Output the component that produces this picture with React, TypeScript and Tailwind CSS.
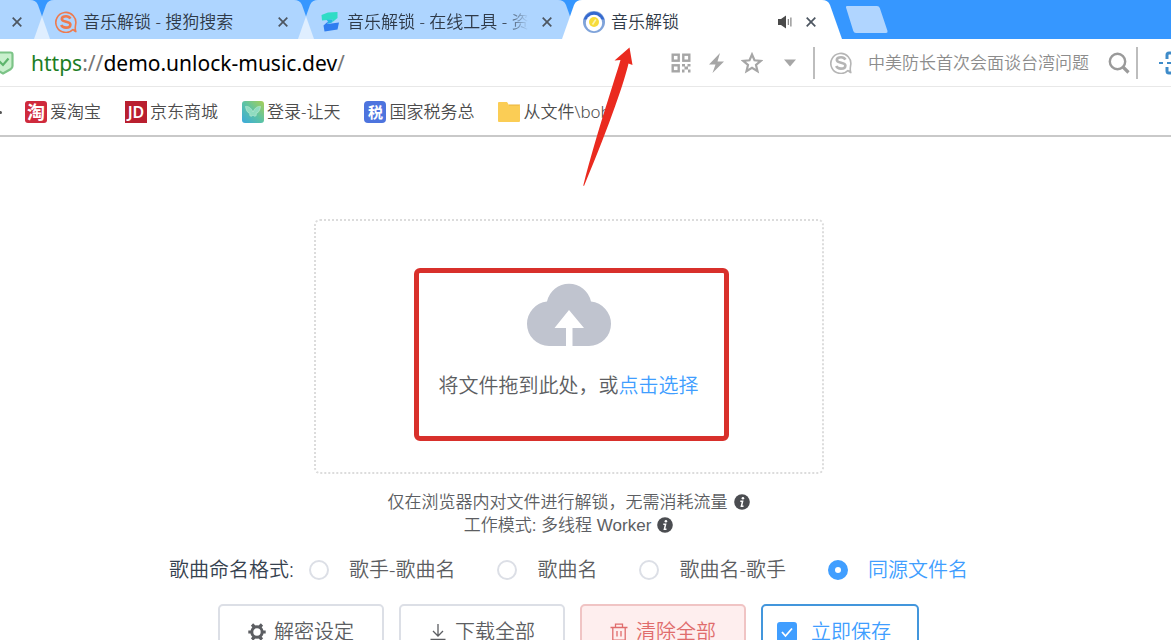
import { useState } from 'react';
import type { ReactNode } from 'react';

const ICON_GRAY = '#a6a6a6';

// ---------- favicons ----------

function SogouIcon({ color, className }: { color: string; className?: string }) {
  return (
    <svg viewBox="0 0 22 22" className={`size-[22px] shrink-0 ${className ?? ''}`} aria-hidden="true">
      <path
        d="M18.2 18.2A10 10 0 1 1 20.6 13.6 M20.6 13.6C20.2 16 19.8 17.8 20.8 20.6C19.8 20.2 19 19.4 18.2 18.2"
        fill="none"
        stroke={color}
        strokeWidth="1.6"
        strokeLinejoin="round"
      />
      <path
        d="M15.4 7.6C14.6 5.9 12.8 5.2 11 5.2C8.6 5.2 6.8 6.3 6.8 8C6.8 11.6 15.4 9.8 15.4 13.4C15.4 15.4 13.4 16.6 11 16.6C8.8 16.6 7 15.8 6.2 14"
        fill="none"
        stroke={color}
        strokeWidth="2.6"
      />
    </svg>
  );
}

function ToolIcon() {
  return (
    <svg viewBox="0 0 22 22" className="size-[22px] shrink-0" aria-hidden="true">
      <path d="M2.500 4L9 1.500L18.500 1V7L13 11.500L14 8.500L3 9.500Z" fill="#2fdcc6" />
      <path d="M4.500 14.500L9 10.500L8.500 13L20 11.500L18.500 18.500L5.500 20.500Z" fill="#2f7df0" />
      <path d="M7.500 8.800L14 8.500L13 11.500L8.500 13L9 10.500Z" fill="#27b4e2" />
    </svg>
  );
}

function UnlockMusicIcon() {
  return (
    <svg viewBox="0 0 22 22" className="size-[22px] shrink-0" aria-hidden="true">
      <circle cx="11" cy="11" r="11" fill="#7fa3da" />
      <path d="M0.500 8.500A11 11 0 0 1 21.500 8.500Z" fill="#3569cf" />
      <circle cx="11" cy="12" r="8.200" fill="#fff" />
      <circle cx="11" cy="11" r="5" fill="#f7dc3a" />
      <path d="M9.500 13.500L12.800 8.500" stroke="#fdf3ae" strokeWidth="1.600" />
    </svg>
  );
}

function ButterflyIcon() {
  return (
    <svg viewBox="0 0 22 22" className="size-[22px] shrink-0" aria-hidden="true">
      <defs>
        <linearGradient id="butterfly" x1="1" y1="0" x2="0" y2="1">
          <stop offset="0" stopColor="#a9cf55" />
          <stop offset="0.5" stopColor="#5cc3a4" />
          <stop offset="1" stopColor="#3aa9dc" />
        </linearGradient>
      </defs>
      <rect width="22" height="22" rx="3" fill="url(#butterfly)" />
      <path
        d="M11 11C9 6.5 6 5 3.5 5.5C4 9 5.5 12 8 12.5C7 14 8.5 17 11 14C13.500 17 15 14 14 12.5C16.500 12 18 9 18.500 5.500C16 5 13 6.500 11 11Z"
        fill="#8fdcc0"
        stroke="#c4ecd9"
        strokeWidth="0.6"
      />
    </svg>
  );
}

function FolderIcon() {
  return (
    <svg viewBox="0 0 22 22" className="size-[22px] shrink-0" aria-hidden="true">
      <path d="M0 2Q0 1 1 1H9L11 4H21Q22 4 22 5V20Q22 21 21 21H1Q0 21 0 20Z" fill="#fbcd55" />
      <path d="M11 4H22" stroke="#e9b43c" strokeWidth="1" />
    </svg>
  );
}

function GlyphIcon({ text, className }: { text: string; className: string }) {
  return (
    <span className={`flex size-[22px] shrink-0 items-center justify-center leading-none text-white ${className}`}>
      {text}
    </span>
  );
}

// ---------- tab strip ----------

interface TabProps {
  title: string;
  icon: ReactNode;
  active?: boolean;
}

function TabShape({ active, rightOnly }: { active?: boolean; rightOnly?: boolean }) {
  const fill = active ? 'fill-white' : 'fill-white/60';
  return (
    <div className="absolute inset-0 flex" aria-hidden="true">
      {!rightOnly && (
        <svg viewBox="0 0 20 39" className={`h-[39px] w-5 shrink-0 ${fill}`}>
          <path d="M0 39L12 5Q14 0 20 0V39Z" />
        </svg>
      )}
      <div className={`flex-1 ${active ? 'bg-white' : 'bg-white/60'}`} />
      <svg viewBox="0 0 20 39" className={`h-[39px] w-5 shrink-0 ${fill}`}>
        <path d="M20 39L8 5Q6 0 0 0V39Z" />
      </svg>
    </div>
  );
}

function CloseButton({ label }: { label: string }) {
  return (
    <button type="button" aria-label={label} className="shrink-0 p-1">
      <svg viewBox="0 0 10 10" className="size-2.5" aria-hidden="true">
        <path d="M0.700 0.700L9.300 9.300M9.300 0.700L0.700 9.300" stroke="#4d5661" strokeWidth="1.7" />
      </svg>
    </button>
  );
}

function Tab({ title, icon, active }: TabProps) {
  return (
    <div className="relative -ml-4 h-[39px] w-[280px] min-w-0">
      <TabShape active={active} />
      <div className="relative flex h-full items-center gap-1.5 pl-[21px] pr-[22px] pt-1">
        {icon}
        <a
          href="#"
          className={`min-w-0 flex-1 overflow-hidden whitespace-nowrap text-[17px] leading-6 text-[#2f3a48] ${
            title.length > 14 ? '[mask-image:linear-gradient(to_right,black_86%,transparent_98%)]' : ''
          }`}
        >
          {title}
        </a>
        {active && (
          <svg viewBox="0 0 14 14" className="mr-1 size-3.5 shrink-0" aria-hidden="true">
            <path d="M0 4H3L8 0.500V13.500L3 10H0Z" fill="#4a4a4a" />
            <path d="M10.300 4V10M12.900 2.500V11.500" stroke="#777" strokeWidth="1.100" />
          </svg>
        )}
        <CloseButton label={`关闭 ${title}`} />
      </div>
    </div>
  );
}

function TabStrip() {
  return (
    <div className="flex h-[39px] overflow-hidden bg-[#3697ff]">
      <div className="relative w-[50px] shrink-0">
        <TabShape rightOnly />
        <div className="relative flex h-full items-center pl-2 pt-1">
          <CloseButton label="关闭" />
        </div>
      </div>
      <Tab title="音乐解锁 - 搜狗搜索" icon={<SogouIcon color="#ee7a4e" />} />
      <Tab title="音乐解锁 - 在线工具 - 资" icon={<ToolIcon />} />
      <Tab title="音乐解锁" icon={<UnlockMusicIcon />} active />
      <button type="button" aria-label="新标签页" className="ml-0.5 shrink-0 self-start pt-1.5">
        <svg viewBox="0 0 44 27" className="h-[27px] w-11" aria-hidden="true">
          <path d="M2 1.500Q1.500 0 3 0H33Q35 0 35.800 2L43.500 25Q44 27 42 27H12Q10 27 9.300 25Z" fill="#b0d5ff" />
        </svg>
      </button>
    </div>
  );
}

// ---------- address bar ----------

function AddressBar() {
  return (
    <div className="flex h-12 items-center overflow-hidden border-b border-[#e8e8e8] bg-white">
      <svg viewBox="0 0 22 24" className="-ml-2 h-6 w-[22px] shrink-0" aria-hidden="true">
        <path
          d="M3.500 1.500H18.500Q20.500 1.500 20.500 3.500V15Q20.500 17 18.500 18.200L11 22.500L3.500 18.200Q1.500 17 1.500 15V3.500Q1.500 1.500 3.500 1.500Z"
          fill="#c9f0cd"
          stroke="#7cc487"
          strokeWidth="2.200"
        />
        <path d="M6.500 9.500L11 14L16.500 7.500" fill="none" stroke="#5db56c" strokeWidth="2.200" />
      </svg>
      <a href="#" className="ml-[17px] flex-1 whitespace-nowrap text-[21px] font-normal leading-7 text-black">
        <span className="text-[#1d7d24]">https</span>
        <span className="text-[#777]">://</span>
        demo.unlock-music.dev
        <span className="text-[#777]">/</span>
      </a>

      <div className="flex shrink-0 items-center">
        <button type="button" aria-label="二维码">
          <svg viewBox="0 0 20 20" className="size-5" aria-hidden="true">
            <g fill="none" stroke={ICON_GRAY} strokeWidth="2.400">
              <rect x="1.700" y="1.700" width="6" height="6" />
              <rect x="12.300" y="1.700" width="6" height="6" />
              <rect x="1.700" y="12.300" width="6" height="6" />
            </g>
            <path
              d="M11 11H14V13.500H11ZM16.500 11H19.500V13.500H16.500ZM13.500 13.500H17V16.500H13.500ZM11 16.500H13.500V19.500H11ZM17 16.500H19.500V19.500H17Z"
              fill={ICON_GRAY}
            />
          </svg>
        </button>
        <button type="button" aria-label="极速模式" className="ml-4">
          <svg viewBox="0 0 20 22" className="h-[22px] w-5" aria-hidden="true">
            <path d="M13 1L2 12.500H8.500L5.500 21L17 9.500H10.500Z" fill={ICON_GRAY} />
          </svg>
        </button>
        <button type="button" aria-label="收藏" className="ml-3.5">
          <svg viewBox="0 0 22 22" className="size-[22px]" aria-hidden="true">
            <path
              d="M11 2.500L13.500 8.300L19.800 8.900L15 13L16.500 19.200L11 15.900L5.500 19.200L7 13L2.200 8.900L8.500 8.300Z"
              fill="none"
              stroke={ICON_GRAY}
              strokeWidth="2.200"
            />
          </svg>
        </button>
        <button type="button" aria-label="更多" className="ml-5">
          <svg viewBox="0 0 14 8" className="h-2 w-3.5" aria-hidden="true">
            <path d="M1 0.500H13L7 7.500Z" fill={ICON_GRAY} />
          </svg>
        </button>
      </div>

      <form className="ml-4 flex shrink-0 items-center border-x-2 border-[#bdbdbd] py-1 pl-[15px] pr-1.5" onSubmit={e => e.preventDefault()}>
        <SogouIcon color="#b5b5b5" />
        <input
          type="text"
          aria-label="搜索"
          placeholder="中美防长首次会面谈台湾问题"
          className="ml-4 w-[232px] text-[17px] leading-6 outline-none placeholder:text-[#8c8c8c]"
        />
        <button type="submit" aria-label="搜索" className="ml-2">
          <svg viewBox="0 0 22 22" className="size-[22px]" aria-hidden="true">
            <circle cx="9.500" cy="9.500" r="7.700" fill="none" stroke="#9a9a9a" strokeWidth="2.400" />
            <path d="M15 15L20.500 20.500" stroke="#9a9a9a" strokeWidth="3.200" />
          </svg>
        </button>
      </form>
      <button type="button" aria-label="截图" className="ml-5 w-[13px] shrink-0 overflow-hidden">
        <svg viewBox="0 0 26 24" className="h-6 w-[26px]" aria-hidden="true">
          <path d="M13 2H11Q9 2 9 4V8M9 16V20Q9 22 11 22H13M21 2H23M21 22H23" fill="none" stroke="#3e8bc9" strokeWidth="3" />
          <path d="M1 12H5M9 12H13" stroke="#3e8bc9" strokeWidth="2" />
        </svg>
      </button>
    </div>
  );
}

// ---------- bookmarks ----------

const bookmarks: { name: string; icon: ReactNode }[] = [
  { name: '爱淘宝', icon: <GlyphIcon text="淘" className="rounded-[3px] bg-[#cf2a3c] text-[18px] font-bold" /> },
  { name: '京东商城', icon: <GlyphIcon text="JD" className="bg-[#b91f2f] text-[16px] font-semibold" /> },
  { name: '登录-让天', icon: <ButterflyIcon /> },
  { name: '国家税务总', icon: <GlyphIcon text="税" className="rounded-[4px] bg-[#4d74de] text-[15px] font-bold" /> },
  { name: '从文件\\bob', icon: <FolderIcon /> },
];

function BookmarkBar() {
  return (
    <nav className="flex h-[50px] items-center gap-6 border-b-2 border-[#c9c9c9] bg-white pt-0.5">
      <span className="-mr-px h-[3px] w-0.5 rounded-r-full bg-[#555]" />
      {bookmarks.map(b => (
        <a key={b.name} href="#" className="flex items-center gap-[3px] whitespace-nowrap text-[17px] leading-6 text-[#4c4c4c]">
          {b.icon}
          {b.name}
        </a>
      ))}
    </nav>
  );
}

// ---------- page ----------

function DropZone() {
  return (
    <div className="relative flex h-[255px] w-[510px] flex-col items-center rounded-md border-2 border-dotted border-[#dcdcdc] pt-[61px]">
      <svg viewBox="0 0 84 64" className="h-16 w-[84px]" aria-hidden="true">
        <path
          d="M22 64A22 22 0 0 1 0 42A22.500 22.500 0 0 1 20 19.500A22.500 22.500 0 0 1 64 19.500A22.500 22.500 0 0 1 84 42A22 22 0 0 1 62 64H45.500V46H57L42 28L27.500 46H39V64Z"
          fill="#c0c4cf"
        />
      </svg>
      <label className="mt-[26px] cursor-pointer text-[20px] leading-7 text-[#5c5e62]">
        将文件拖到此处，或<span className="text-[#409eff]">点击选择</span>
        <input type="file" multiple className="sr-only" />
      </label>
      {/* highlight frame */}
      <div className="pointer-events-none absolute left-[98px] right-[93px] top-[47px] h-[173px] rounded-md border-[5px] border-[#d8302b]" />
    </div>
  );
}

function InfoIcon() {
  return (
    <svg viewBox="0 0 16 16" className="ml-1.5 inline-block size-4 align-[-2px]" aria-hidden="true">
      <circle cx="8" cy="8" r="7.800" fill="#4b4d51" />
      <circle cx="8.900" cy="4.300" r="1.300" fill="#fff" />
      <path d="M6.300 7.200H8.600L7.400 12.200H9.500" fill="none" stroke="#fff" strokeWidth="1.500" />
    </svg>
  );
}

const formats = ['歌手-歌曲名', '歌曲名', '歌曲名-歌手', '同源文件名'];

function FormatPicker() {
  const [format, setFormat] = useState('同源文件名');
  return (
    <fieldset className="mt-[19px] flex items-center whitespace-nowrap text-[20px] leading-7">
      <legend className="float-left text-[#36424f]">歌曲命名格式:</legend>
      <div className="flex gap-[42px] pl-[15px]">
        {formats.map(f => (
          <label key={f} className="flex cursor-pointer items-center gap-5 text-[#5c5e62] has-checked:text-[#409eff]">
            <input
              type="radio"
              name="format"
              value={f}
              checked={format === f}
              onChange={() => setFormat(f)}
              className="size-5 appearance-none rounded-full border-2 border-[#dcdfe6] bg-white checked:border-[7px] checked:border-[#409eff]"
            />
            {f}
          </label>
        ))}
      </div>
    </fieldset>
  );
}

function GearIcon() {
  return (
    <svg viewBox="0 0 18 18" className="size-[18px]" aria-hidden="true">
      <circle cx="9" cy="9" r="5.200" fill="none" stroke="currentColor" strokeWidth="3" />
      <path
        d="M4 1.500L6.500 4M14 1.500L11.500 4M4 16.500L6.500 14M14 16.500L11.500 14M0.300 9H3.500M14.500 9H17.700"
        stroke="currentColor"
        strokeWidth="3.200"
      />
    </svg>
  );
}

function DownloadIcon() {
  return (
    <svg viewBox="0 0 18 18" className="size-[18px]" aria-hidden="true">
      <path d="M9 1V13M4 8L9 13L14 8M1.500 16.500H16.500" fill="none" stroke="currentColor" strokeWidth="1.300" />
    </svg>
  );
}

function TrashIcon() {
  return (
    <svg viewBox="0 0 18 18" className="size-[18px]" aria-hidden="true">
      <path
        d="M0.500 4.500H17.500M5.500 4.500V1.200H12.500V4.500M2.800 4.500V17.200H15.200V4.500M7 8V13.500M11 8V13.500"
        fill="none"
        stroke="currentColor"
        strokeWidth="1.300"
      />
    </svg>
  );
}

function Actions() {
  return (
    <div className="mt-5 flex gap-[15px] whitespace-nowrap text-[20px] leading-7 text-[#5c5e62]">
      <button type="button" className="flex h-14 items-center gap-2 rounded-[5px] border-2 border-[#dcdfe6] bg-white px-7">
        <GearIcon />
        解密设定
      </button>
      <button type="button" className="flex h-14 items-center gap-2 rounded-[5px] border-2 border-[#dcdfe6] bg-white px-7">
        <DownloadIcon />
        下载全部
      </button>
      <button
        type="button"
        className="flex h-14 items-center gap-2 rounded-[5px] border-2 border-[#f0c4c4] bg-[#feeeee] px-7 text-[#e06c6c]"
      >
        <TrashIcon />
        清除全部
      </button>
      <label className="flex h-14 cursor-pointer items-center gap-3.5 rounded-[5px] border-2 border-[#4396dc] bg-white pl-3.5 pr-[26px] text-[#409eff]">
        <span className="relative flex size-5">
          <input
            type="checkbox"
            defaultChecked
            className="peer size-5 appearance-none rounded-[3px] border-2 border-[#dcdfe6] checked:border-[#409eff] checked:bg-[#409eff]"
          />
          <svg viewBox="0 0 20 20" className="pointer-events-none absolute inset-0 hidden size-5 peer-checked:block" aria-hidden="true">
            <path d="M5 10L8.500 14L15 6.500" fill="none" stroke="#fff" strokeWidth="1.800" />
          </svg>
        </span>
        立即保存
      </label>
    </div>
  );
}

export default function App() {
  return (
    <div className="relative h-screen overflow-hidden bg-white font-['Noto_Sans','Noto_Sans_CJK_SC',sans-serif] font-[350]">
      <TabStrip />
      <AddressBar />
      <BookmarkBar />

      <main className="flex flex-col items-center pr-[34px] pt-[82px]">
        <DropZone />
        <div className="mt-[17px] text-center font-['Liberation_Sans','Noto_Sans_CJK_SC',sans-serif] text-[17px] leading-[23px] text-[#5c5e62]">
          <p>
            仅在浏览器内对文件进行解锁，无需消耗流量
            <InfoIcon />
          </p>
          <p>
            工作模式: 多线程 Worker
            <InfoIcon />
          </p>
        </div>
        <FormatPicker />
        <Actions />
      </main>

      {/* arrow pointing at the active tab */}
      <svg viewBox="0 0 50 140" className="pointer-events-none absolute left-[583px] top-[47px] h-[140px] w-[50px]" aria-hidden="true">
        <path d="M46.500 0.500L49.500 18L45.500 16.500C42 32 28 75 1 139L0.300 138.500C14 85 32 32 37.500 13L31.500 13.500Z" fill="#ea2a1f" />
      </svg>
    </div>
  );
}
